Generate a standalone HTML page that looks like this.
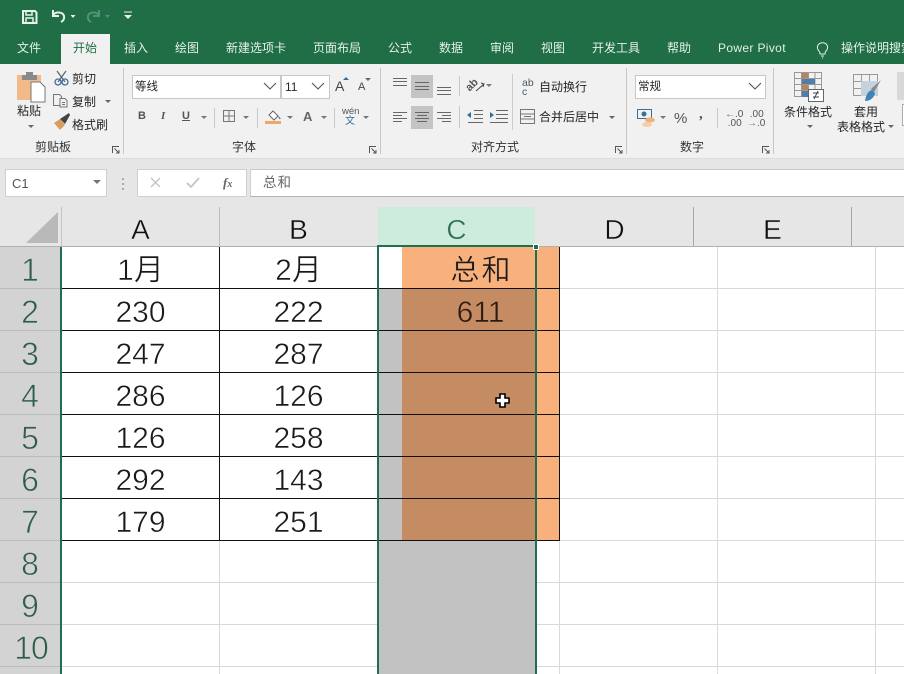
<!DOCTYPE html>
<html><head><meta charset="utf-8"><style>
html,body{margin:0;padding:0;width:904px;height:674px;overflow:hidden;background:#fff}
body{position:relative;font-family:"Liberation Sans","Noto Sans CJK SC",sans-serif;color:#222}
.a{position:absolute}
.t{position:absolute;white-space:nowrap;line-height:1}
.tab{position:absolute;top:41px;font-size:12px;color:#e4f0ea;white-space:nowrap;line-height:15px}
.r{position:absolute;font-size:12px;white-space:nowrap;line-height:14px;color:#262626}
.g{position:absolute;font-size:12px;white-space:nowrap;line-height:14px;color:#333;top:140px}
.sep{position:absolute;width:1px;background:#c8c8c8}
.sep2{position:absolute;width:1px;top:68px;height:86px;background:#c6c6c6}
.cell{position:absolute;font-size:30px;line-height:42px;height:42px;text-align:center;color:#1a1a1a;width:157px;margin-top:1px;-webkit-text-stroke:.5px #fff}
.cell i{font-style:normal;-webkit-text-stroke:.4px #fff}
.rh{position:absolute;left:0;width:60px;text-align:center;font-size:32px;line-height:42px;height:42px;color:#2f5e48;-webkit-text-stroke:.7px #d3d3d3}
.ch{position:absolute;top:207px;height:39px;width:157px;text-align:center;font-size:28px;line-height:45px;color:#111;-webkit-text-stroke:.4px #e6e6e6}
.h{position:absolute;height:1px}
.v{position:absolute;width:1px}
svg{position:absolute;overflow:visible}
</style></head><body>
<div class="a" style="left:0;top:0;width:904px;height:64px;background:#1f6e45"></div>
<div class="a" style="left:61px;top:34px;width:49px;height:30px;background:#f1f1f1"></div>
<div class="a" style="left:0;top:64px;width:904px;height:94px;background:#f1f1f1"></div>
<div class="a" style="left:0;top:158px;width:904px;height:89px;background:#e6e6e6"></div>

<!-- QAT -->
<svg style="left:0;top:0" width="200" height="34" fill="none">
<path d="M23 11h12l1.500 1.500v10.500h-13.500z" stroke="#e8f3ed" stroke-width="2"/>
<path d="M26 11v4h6v-4M26 23v-5h7v5" stroke="#e8f3ed" stroke-width="1.500"/>
<path d="M53 10v6h6" stroke="#e8f3ed" stroke-width="2"/>
<path d="M53 15c3-4 10-3 11 1 .6 3-1 5-3 6" stroke="#e8f3ed" stroke-width="2"/>
<path d="M70.500 15h5l-2.500 3z" fill="#e8f3ed"/>
<path d="M99 10v6h-6" stroke="#55917a" stroke-width="2"/>
<path d="M99 15c-3-4-10-3-11 1-.6 3 1 5 3 6" stroke="#55917a" stroke-width="2"/>
<path d="M105 15h5l-2.500 3z" fill="#55917a"/>
<path d="M124 12h8" stroke="#e8f3ed"/><path d="M124 15h8l-4 4z" fill="#e8f3ed"/>
</svg>

<!-- tabs -->
<div class="tab" style="left:17px">文件</div>
<div class="tab" style="left:73px;color:#1f6e45">开始</div>
<div class="tab" style="left:124px">插入</div>
<div class="tab" style="left:175px">绘图</div>
<div class="tab" style="left:226px">新建选项卡</div>
<div class="tab" style="left:313px">页面布局</div>
<div class="tab" style="left:388px">公式</div>
<div class="tab" style="left:439px">数据</div>
<div class="tab" style="left:490px">审阅</div>
<div class="tab" style="left:541px">视图</div>
<div class="tab" style="left:592px">开发工具</div>
<div class="tab" style="left:667px">帮助</div>
<div class="tab" style="left:718px;letter-spacing:.35px">Power Pivot</div>
<svg style="left:815px;top:41px" width="16" height="18" fill="none" stroke="#e8f3ed"><path d="M4 10c-2-2-2-4-1-6 2-3 7-3 9 0 1 2 1 4-1 6-1 1-1 2-1 3h-5c0-1 0-2-1-3zM6 15h3M7 17h1"/></svg>
<div class="tab" style="left:841px">操作说明搜索</div>

<!-- clipboard -->
<svg style="left:0;top:64px" width="120" height="70" fill="none">
<rect x="17" y="11" width="24" height="25" fill="#f2b98a"/>
<rect x="22" y="11" width="15" height="5" fill="#8a8a8a"/><rect x="26" y="8" width="7" height="4" fill="#8a8a8a"/>
<path d="M31 18h9l5 5v15H31z" fill="#fff" stroke="#777"/>
<path d="M57 7l8 11M66 7l-8 11" stroke="#666" stroke-width="1.300"/>
<circle cx="58" cy="18" r="3" stroke="#3f6f9e" stroke-width="1.300"/><circle cx="65" cy="18" r="3" stroke="#3f6f9e" stroke-width="1.300"/>
<path d="M53.500 30.500h6l2 2v9h-8z" stroke="#777"/><path d="M60 34.500h5l2 2v6.500h-7z" fill="#f1f1f1" stroke="#777"/>
<path d="M62 38.500h3M62 40.500h3" stroke="#777"/>
<path d="M54 59l6 7 5-5-5-6z" fill="#dd9c5f"/><path d="M60 55l9-6 1 2-5 9z" fill="#444"/>
</svg>
<div class="r" style="left:17px;top:104px">粘贴</div>
<div class="a" style="left:28px;top:125px;border:3px solid transparent;border-top:3px solid #666"></div>
<div class="r" style="left:72px;top:72px">剪切</div>
<div class="r" style="left:72px;top:95px">复制</div>
<div class="a" style="left:105px;top:100px;border:3px solid transparent;border-top:3px solid #666"></div>
<div class="r" style="left:72px;top:118px">格式刷</div>
<div class="g" style="left:35px">剪贴板</div>
<svg style="left:112px;top:146px" width="8" height="8" fill="none" stroke="#555"><path d="M.5 7V.5H7M2.500 2.500L7 7M4 7h3V4"/></svg>
<div class="sep2" style="left:123px"></div>

<!-- font -->
<div class="a" style="left:132px;top:75px;width:147px;height:22px;background:#fff;border:1px solid #c6c6c6"></div>
<div class="r" style="left:135px;top:80px;font-size:11.500px">等线</div>
<div class="a" style="left:281px;top:75px;width:47px;height:22px;background:#fff;border:1px solid #c6c6c6"></div>
<div class="r" style="left:285px;top:80px;font-size:12px">11</div>
<svg style="left:263px;top:82px" width="70" height="10" fill="none" stroke="#555" stroke-width="1.100"><path d="M1 1l6 6 6-6M49 1l6 6 6-6"/></svg>
<div class="t" style="left:335px;top:79px;font-size:14px;color:#444">A</div>
<div class="a" style="left:343px;top:77px;border:3px solid transparent;border-top:0;border-bottom:3px solid #2f6f9f"></div>
<div class="t" style="left:358px;top:82px;font-size:11px;color:#444">A</div>
<div class="a" style="left:365px;top:78px;border:3px solid transparent;border-bottom:0;border-top:3px solid #666"></div>
<div class="t" style="left:138px;top:111px;font-size:11px;font-weight:bold;color:#555">B</div>
<div class="t" style="left:161px;top:111px;font-size:11px;font-weight:bold;font-style:italic;color:#555;font-family:'Liberation Serif',serif">I</div>
<div class="t" style="left:182px;top:111px;font-size:11px;font-weight:bold;color:#555;text-decoration:underline">U</div>
<div class="a" style="left:201px;top:116px;border:3px solid transparent;border-top:3px solid #777"></div>
<div class="sep" style="left:214px;top:108px;height:20px"></div>
<svg style="left:223px;top:110px" width="14" height="14" fill="none" stroke="#777"><path d="M.5.500h11v11H.5zM6 .5v11M.5 6h11"/></svg>
<div class="a" style="left:243px;top:116px;border:3px solid transparent;border-top:3px solid #777"></div>
<div class="sep" style="left:257px;top:108px;height:20px"></div>
<svg style="left:265px;top:108px" width="18" height="18" fill="none"><path d="M8 3l5 5-4 4-5-5z" stroke="#666" fill="#fff"/><path d="M13 7l3 4-2 0z" fill="#3f83b8"/><rect x="0" y="13" width="16" height="3" fill="#f0a868"/></svg>
<div class="a" style="left:287px;top:116px;border:3px solid transparent;border-top:3px solid #777"></div>
<div class="t" style="left:303px;top:110px;font-size:13px;font-weight:bold;color:#666">A</div>
<div class="a" style="left:321px;top:116px;border:3px solid transparent;border-top:3px solid #777"></div>
<div class="sep" style="left:334px;top:108px;height:20px"></div>
<div class="t" style="left:342px;top:107px;font-size:9.500px;color:#555">wén</div>
<div class="t" style="left:345px;top:117px;font-size:10px;color:#2f6f9f">文</div>
<div class="a" style="left:363px;top:116px;border:3px solid transparent;border-top:3px solid #777"></div>
<div class="g" style="left:232px">字体</div>
<svg style="left:369px;top:146px" width="8" height="8" fill="none" stroke="#555"><path d="M.5 7V.5H7M2.500 2.500L7 7M4 7h3V4"/></svg>
<div class="sep2" style="left:380px"></div>

<!-- align -->
<div class="a" style="left:411px;top:75px;width:22px;height:23px;background:#c4c4c4"></div>
<div class="a" style="left:411px;top:106px;width:22px;height:23px;background:#c4c4c4"></div>
<svg style="left:385px;top:70px" width="120" height="62" fill="none" stroke="#666">
<path d="M8 8.500h14M8 11.500h14M8 15.500h14"/>
<path d="M30 12.500h14M30 16.500h14M30 19.500h14"/>
<path d="M52 17.500h14M52 20.500h14M52 24.500h14"/>
<path d="M8 42.500h14M8 45.500h9M8 48.500h14M8 51.500h9"/>
<path d="M30 42.500h14M32 45.500h10M30 48.500h14M32 51.500h10"/>
<path d="M52 42.500h14M57 45.500h9M52 48.500h14M57 51.500h9"/>
</svg>
<div class="sep" style="left:459px;top:76px;height:20px"></div>
<div class="sep" style="left:459px;top:106px;height:22px"></div>
<div class="t" style="left:466px;top:80px;font-size:11px;font-weight:bold;color:#555;transform:rotate(-45deg)">ab</div>
<svg style="left:466px;top:76px" width="30" height="20" fill="none" stroke="#555"><path d="M10 15l8-7M15 7l3 1-1 3" stroke="#444"/></svg>
<div class="a" style="left:486px;top:84px;border:3px solid transparent;border-top:3px solid #777"></div>
<svg style="left:466px;top:108px" width="50" height="16" fill="none" stroke="#666"><path d="M8 2.500h9M8 6.500h9M8 10.500h9M2 14.500h15"/><path d="M1 7l4-3v6z" fill="#2f6f9f" stroke="none"/><path d="M30 2.500h12M30 6.500h12M30 10.500h12M24 14.500h18"/><path d="M28 7l-4-3v6z" fill="#2f6f9f" stroke="none"/></svg>
<div class="sep2" style="left:512px;top:74px;height:56px;background:#ccc"></div>
<div class="t" style="left:522px;top:79px;font-size:10.500px;line-height:9px;color:#4a5a66;width:14px">ab<br>c</div>
<div class="r" style="left:539px;top:80px">自动换行</div>
<svg style="left:520px;top:109px" width="15" height="15" fill="none" stroke="#777"><path d="M.5.500h14v14H.5zM.5 5h14M.5 10h14M4 7.500h7"/></svg>
<div class="r" style="left:539px;top:110px">合并后居中</div>
<div class="a" style="left:609px;top:116px;border:3px solid transparent;border-top:3px solid #666"></div>
<div class="g" style="left:471px">对齐方式</div>
<svg style="left:615px;top:146px" width="8" height="8" fill="none" stroke="#555"><path d="M.5 7V.5H7M2.500 2.500L7 7M4 7h3V4"/></svg>
<div class="sep2" style="left:626px"></div>

<!-- number -->
<div class="a" style="left:635px;top:75px;width:129px;height:22px;background:#fff;border:1px solid #c6c6c6"></div>
<div class="r" style="left:638px;top:80px;font-size:11.500px">常规</div>
<svg style="left:748px;top:82px" width="16" height="10" fill="none" stroke="#555" stroke-width="1.100"><path d="M1 1l6 6 6-6"/></svg>
<svg style="left:637px;top:109px" width="20" height="20" fill="none"><rect x=".5" y=".5" width="14" height="9" stroke="#3b6f96"/><circle cx="7" cy="5" r="2.500" fill="#3b6f96"/><ellipse cx="13" cy="11" rx="5" ry="2.500" fill="#efb27f"/><ellipse cx="10" cy="15.500" rx="5" ry="2.500" fill="#f5cda8"/></svg>
<div class="a" style="left:660px;top:116px;border:3px solid transparent;border-top:3px solid #777"></div>
<div class="t" style="left:674px;top:111px;font-size:15px;color:#555">%</div>
<div class="t" style="left:699px;top:107px;font-size:15px;font-weight:bold;color:#555;font-family:'Liberation Serif',serif">,</div>
<div class="sep" style="left:717px;top:108px;height:20px"></div>
<div class="t" style="left:725px;top:110px;font-size:10px;line-height:9px;color:#555;width:20px"><span style="color:#3f7fa8">←</span>.0<br>&nbsp;.00</div>
<div class="t" style="left:747px;top:110px;font-size:10px;line-height:9px;color:#555;width:20px">&nbsp;.00<br><span style="color:#3f7fa8">→</span>.0</div>
<div class="g" style="left:680px">数字</div>
<svg style="left:762px;top:146px" width="8" height="8" fill="none" stroke="#555"><path d="M.5 7V.5H7M2.500 2.500L7 7M4 7h3V4"/></svg>
<div class="sep2" style="left:773px"></div>

<!-- styles -->
<svg style="left:793px;top:71px" width="111" height="36" fill="none">
<path d="M1.500 1.500h27v24h-27zM1.500 7.500h27M1.500 13.500h27M1.500 19.500h27M8.500 1.500v24M15.500 1.500v24M22 1.500v24" stroke="#999"/>
<rect x="9" y="2" width="6" height="5" fill="#b98458"/><rect x="9" y="8" width="13" height="5" fill="#4f7fa8"/><rect x="9" y="14" width="6" height="5" fill="#b98458"/><rect x="9" y="20" width="6" height="6" fill="#4f7fa8"/>
<rect x="15.500" y="18.500" width="15" height="12" fill="#fff" stroke="#666"/>
<path d="M20 22h6M20 26h6M25 20l-4 8" stroke="#444"/>
<path d="M60.500 3.500h24v21h-24zM60.500 10.500h24M60.500 17.500h24M68.500 3.500v21M76.500 3.500v21" stroke="#999"/>
<rect x="68" y="10" width="17" height="15" fill="#c5d2dd" />
<path d="M88 9l-7 12-3-3z" fill="#888"/><path d="M79 19c-4 1-6 5-7 11 5 0 9-3 10-8z" fill="#3f83b8"/>
</svg>
<div class="a" style="left:897px;top:72px;width:7px;height:28px;background:#d8d8d8"></div>
<div class="a" style="left:902px;top:104px;width:2px;height:20px;background:#fff;border:1px solid #aaa"></div>
<div class="r" style="left:784px;top:105px">条件格式</div>
<div class="a" style="left:807px;top:125px;border:3px solid transparent;border-top:3px solid #666"></div>
<div class="r" style="left:854px;top:105px">套用</div>
<div class="r" style="left:837px;top:120px">表格格式</div>
<div class="a" style="left:888px;top:125px;border:3px solid transparent;border-top:3px solid #666"></div>
<div class="h" style="left:0;top:158px;width:904px;background:#dcdcdc"></div>

<!-- formula bar -->
<div class="a" style="left:5px;top:169px;width:100px;height:26px;background:#fff;border:1px solid #d0d0d0"></div>
<div class="t" style="left:12px;top:177px;font-size:13px;color:#555">C1</div>
<div class="a" style="left:93px;top:180px;border:4px solid transparent;border-top:4px solid #777"></div>
<div class="a" style="left:122px;top:178px;width:2px;height:2px;background:#aaa;box-shadow:0 5px 0 #aaa,0 10px 0 #aaa"></div>
<div class="a" style="left:137px;top:169px;width:108px;height:26px;background:#fff;border:1px solid #d0d0d0"></div>
<svg style="left:150px;top:176px" width="50" height="14" fill="none"><path d="M1 2l9 9M10 2l-9 9" stroke="#c4c4c4" stroke-width="1.400"/><path d="M37 7l4 4 8-9" stroke="#c4c4c4" stroke-width="1.800"/></svg>
<div class="t" style="left:223px;top:176px;font-size:13px;font-style:italic;font-weight:bold;color:#666;font-family:'Liberation Serif',serif">f<span style="font-size:10px">x</span></div>
<div class="a" style="left:250px;top:169px;width:654px;background:#fff;border-top:1px solid #c8c8c8;border-bottom:1px solid #b4b4b4;border-left:1px solid #d0d0d0;box-sizing:border-box;height:28px"></div>
<div class="t" style="left:263px;top:176px;font-size:13.500px;color:#666;letter-spacing:1px">总和</div>

<!-- header -->
<svg style="left:0;top:207px" width="62" height="40"><path d="M26 36L58 5v31z" fill="#b9b9b9"/></svg>
<div class="a" style="left:378px;top:207px;width:157px;height:39px;background:#cdecdc"></div>
<div class="ch" style="left:62px">A</div>
<div class="ch" style="left:220px">B</div>
<div class="ch" style="left:378px;color:#2e6e52;-webkit-text-stroke-color:#cdecdc">C</div>
<div class="ch" style="left:536px">D</div>
<div class="ch" style="left:694px">E</div>
<div class="v" style="left:61px;top:207px;height:39px;background:#c4c4c4"></div>
<div class="v" style="left:219px;top:207px;height:39px;background:#bdbdbd"></div>
<div class="v" style="left:693px;top:207px;height:39px;background:#a6a6a6"></div>
<div class="v" style="left:851px;top:207px;height:39px;background:#a6a6a6"></div>
<div class="h" style="left:0;top:246px;width:904px;background:#b0b0b0"></div>

<!-- row header -->
<div class="a" style="left:0;top:247px;width:60px;height:427px;background:#d3d3d3"></div>
<div class="rh" style="top:249px">1</div><div class="rh" style="top:291px">2</div><div class="rh" style="top:333px">3</div><div class="rh" style="top:375px">4</div><div class="rh" style="top:417px">5</div><div class="rh" style="top:459px">6</div><div class="rh" style="top:501px">7</div><div class="rh" style="top:543px">8</div><div class="rh" style="top:585px">9</div><div class="rh" style="top:627px;left:1px;letter-spacing:-1px">10</div>

<!-- light grid -->
<div class="h" style="left:0;top:288px;width:60px;background:#bbb"></div>
<div class="h" style="left:0;top:330px;width:60px;background:#bbb"></div>
<div class="h" style="left:0;top:372px;width:60px;background:#bbb"></div>
<div class="h" style="left:0;top:414px;width:60px;background:#bbb"></div>
<div class="h" style="left:0;top:456px;width:60px;background:#bbb"></div>
<div class="h" style="left:0;top:498px;width:60px;background:#bbb"></div>
<div class="h" style="left:0;top:540px;width:60px;background:#bbb"></div>
<div class="h" style="left:0;top:582px;width:60px;background:#bbb"></div>
<div class="h" style="left:0;top:624px;width:60px;background:#bbb"></div>
<div class="h" style="left:0;top:666px;width:60px;background:#bbb"></div>
<div class="h" style="left:560px;top:288px;width:344px;background:#d9d9d9"></div>
<div class="h" style="left:560px;top:330px;width:344px;background:#d9d9d9"></div>
<div class="h" style="left:560px;top:372px;width:344px;background:#d9d9d9"></div>
<div class="h" style="left:560px;top:414px;width:344px;background:#d9d9d9"></div>
<div class="h" style="left:560px;top:456px;width:344px;background:#d9d9d9"></div>
<div class="h" style="left:560px;top:498px;width:344px;background:#d9d9d9"></div>
<div class="h" style="left:62px;top:540px;width:842px;background:#d9d9d9"></div>
<div class="h" style="left:62px;top:582px;width:842px;background:#d9d9d9"></div>
<div class="h" style="left:62px;top:624px;width:842px;background:#d9d9d9"></div>
<div class="h" style="left:62px;top:666px;width:842px;background:#d9d9d9"></div>
<div class="v" style="left:219px;top:541px;height:133px;background:#d9d9d9"></div>
<div class="v" style="left:559px;top:541px;height:133px;background:#d9d9d9"></div>
<div class="v" style="left:717px;top:247px;height:427px;background:#d9d9d9"></div>
<div class="v" style="left:875px;top:247px;height:427px;background:#d9d9d9"></div>

<!-- selection fill -->
<div class="a" style="left:379px;top:289px;width:156px;height:385px;background:#c2c2c2"></div>
<div class="a" style="left:402px;top:247px;width:157px;height:293px;background:#f8b07c"></div>
<div class="a" style="left:402px;top:289px;width:133px;height:251px;background:#c58c63"></div>

<!-- black borders -->
<div class="h" style="left:62px;top:288px;width:315px;background:#111"></div>
<div class="h" style="left:62px;top:330px;width:315px;background:#111"></div>
<div class="h" style="left:62px;top:372px;width:315px;background:#111"></div>
<div class="h" style="left:62px;top:414px;width:315px;background:#111"></div>
<div class="h" style="left:62px;top:456px;width:315px;background:#111"></div>
<div class="h" style="left:62px;top:498px;width:315px;background:#111"></div>
<div class="h" style="left:62px;top:540px;width:315px;background:#111"></div>
<div class="h" style="left:379px;top:288px;width:181px;background:#111"></div>
<div class="h" style="left:379px;top:330px;width:181px;background:#111"></div>
<div class="h" style="left:379px;top:372px;width:181px;background:#111"></div>
<div class="h" style="left:379px;top:414px;width:181px;background:#111"></div>
<div class="h" style="left:379px;top:456px;width:181px;background:#111"></div>
<div class="h" style="left:379px;top:498px;width:181px;background:#111"></div>
<div class="h" style="left:379px;top:540px;width:181px;background:#111"></div>
<div class="v" style="left:219px;top:247px;height:293px;background:#111"></div>
<div class="v" style="left:559px;top:247px;height:293px;background:#111"></div>

<!-- cells -->
<div class="cell" style="left:62px;top:249px">1<i>月</i></div><div class="cell" style="left:220px;top:249px">2<i>月</i></div>
<div class="cell" style="left:403px;top:249px;letter-spacing:2px;font-size:29px;-webkit-text-stroke:.4px #f8b07c">总和</div>
<div class="cell" style="left:62px;top:291px">230</div><div class="cell" style="left:220px;top:291px">222</div>
<div class="cell" style="left:402px;top:291px;color:#2a1c12;-webkit-text-stroke-color:#c58c63">611</div>
<div class="cell" style="left:62px;top:333px">247</div><div class="cell" style="left:220px;top:333px">287</div>
<div class="cell" style="left:62px;top:375px">286</div><div class="cell" style="left:220px;top:375px">126</div>
<div class="cell" style="left:62px;top:417px">126</div><div class="cell" style="left:220px;top:417px">258</div>
<div class="cell" style="left:62px;top:459px">292</div><div class="cell" style="left:220px;top:459px">143</div>
<div class="cell" style="left:62px;top:501px">179</div><div class="cell" style="left:220px;top:501px">251</div>

<!-- selection border -->
<div class="a" style="left:60px;top:247px;width:2px;height:427px;background:#1f6e50"></div>
<div class="a" style="left:377px;top:245px;width:160px;height:2px;background:#1f6e50"></div>
<div class="a" style="left:377px;top:245px;width:2px;height:429px;background:#1f6e50"></div>
<div class="a" style="left:535px;top:245px;width:2px;height:429px;background:#1f6e50"></div>
<div class="a" style="left:534px;top:245px;width:4px;height:4px;background:#1f6e50;outline:1px solid #fff;outline-offset:0"></div>

<!-- cursor -->
<svg style="left:494px;top:393px" width="17" height="17">
<path d="M6 1h5v4h4v5h-4v4H6v-4H2V5h4z" fill="#fff" stroke="#000" stroke-width="1.600"/>
</svg>
</body></html>
